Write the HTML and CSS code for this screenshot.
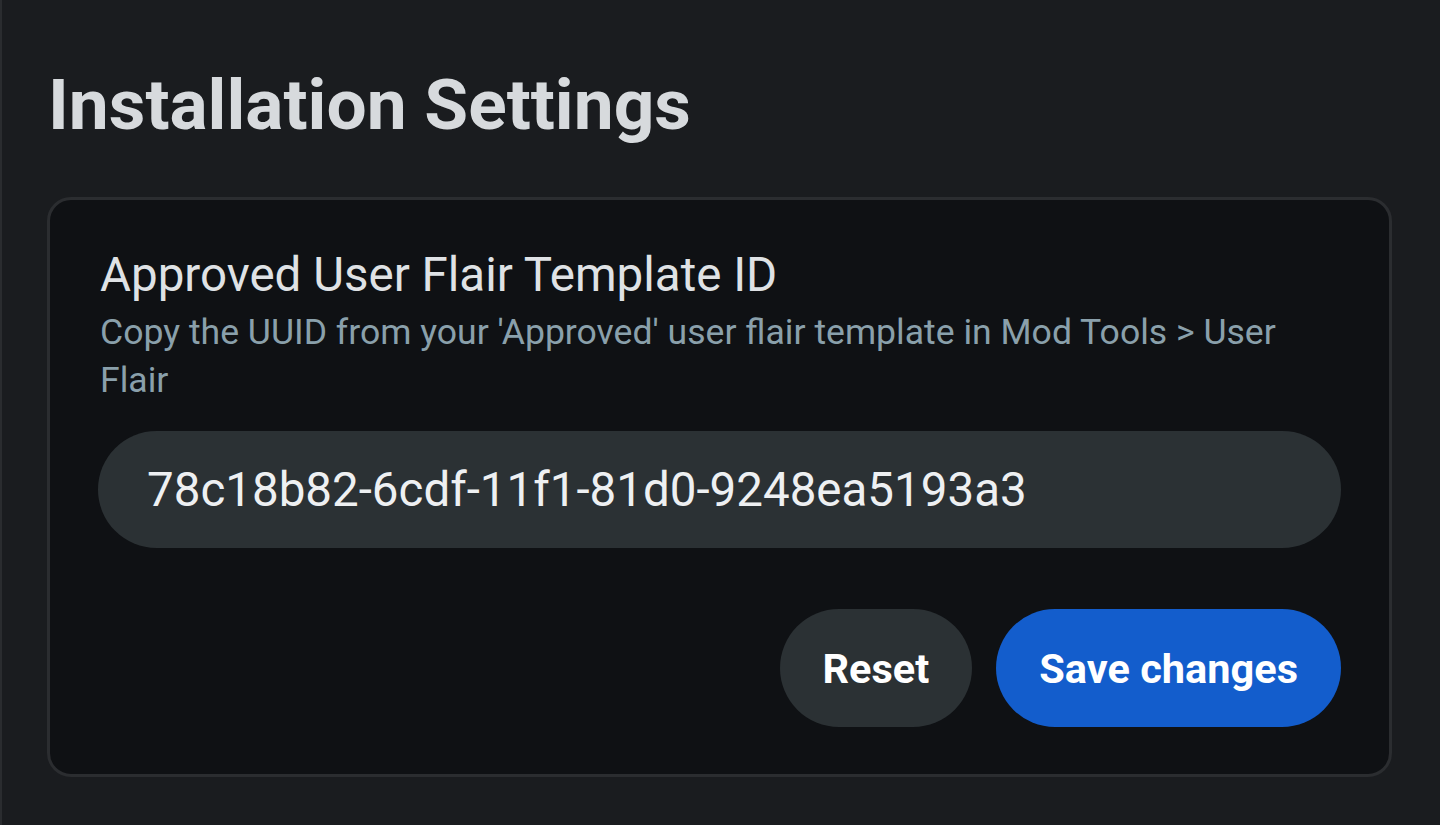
FILE: index.html
```html
<!DOCTYPE html>
<html lang="en">
<head>
<meta charset="utf-8">
<title>Installation Settings</title>
<link rel="stylesheet" href="styles.css">
</head>
<body>
<main class="page">
  <h1 class="page-title">Installation Settings</h1>
  <form class="settings-card">
    <label class="field-label" for="flair-id">Approved User Flair Template ID</label>
    <p class="field-help">Copy the UUID from your 'Approved' user flair template in Mod Tools &gt; User Flair</p>
    <input class="field-input" id="flair-id" type="text" value="78c18b82-6cdf-11f1-81d0-9248ea5193a3">
    <div class="actions">
      <button type="button" class="btn btn-secondary">Reset</button>
      <button type="submit" class="btn btn-primary">Save changes</button>
    </div>
  </form>
</main>
</body>
</html>
```
FILE: styles.css
```css
* {
  box-sizing: border-box;
}

html, body {
  margin: 0;
  height: 100%;
  background: #1a1c1f;
}

body {
  font-family: Roboto, "Liberation Sans", sans-serif;
}

.page {
  min-height: 100%;
  border-left: 2px solid #2a2c2f;
  padding: 60px 48px 40px 45px;
}

.page-title {
  margin: 0 0 47px 1px;
  font-size: 71.25px;
  line-height: 90px;
  font-weight: 700;
  color: #d7dadd;
}

.settings-card {
  display: flex;
  flex-direction: column;
  background: #0f1114;
  border: 3px solid #2b2d30;
  border-radius: 24px;
  padding: 45px 48px 47px 48px;
}

.field-label,
.field-help {
  padding-left: 2px;
}

.field-label {
  font-size: 47.5px;
  line-height: 60px;
  color: #dfe2e5;
}

.field-help {
  margin: 4px 0 27px;
  font-size: 35.6px;
  line-height: 47.5px;
  color: #8aa0ab;
}

.field-input {
  height: 117px;
  border: none;
  border-radius: 60px;
  background: #2b3134;
  padding: 0 49px;
  font-family: inherit;
  font-size: 47.5px;
  color: #eef0f2;
  outline: none;
}

.actions {
  display: flex;
  justify-content: flex-end;
  gap: 24px;
  margin-top: 61px;
}

.btn {
  height: 118px;
  border: none;
  border-radius: 60px;
  padding: 0 43px;
  font-family: inherit;
  font-size: 41.5px;
  font-weight: 700;
  color: #ffffff;
  cursor: pointer;
}

.btn-secondary {
  background: #2b3134;
}

.btn-primary {
  background: #135dcc;
}
```
